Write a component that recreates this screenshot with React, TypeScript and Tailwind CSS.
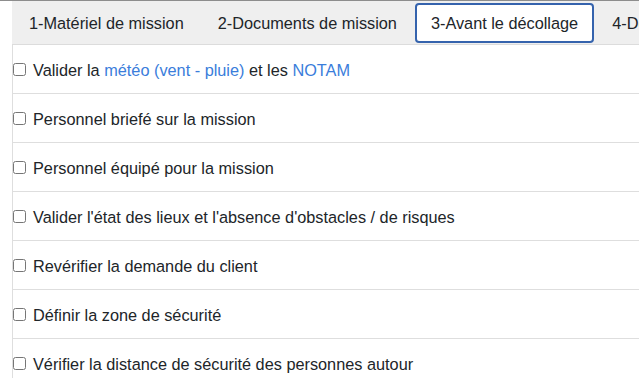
import React from "react";

const tabs = [
  "1-Matériel de mission",
  "2-Documents de mission",
  "3-Avant le décollage",
  "4-Décollage",
];

const Link = ({ children }: { children: React.ReactNode }) => (
  <span className="text-[#3a7ddb]">{children}</span>
);

const rows: React.ReactNode[] = [
  <>
    Valider la <Link>météo (vent - pluie)</Link> et les <Link>NOTAM</Link>
  </>,
  "Personnel briefé sur la mission",
  "Personnel équipé pour la mission",
  "Valider l'état des lieux et l'absence d'obstacles / de risques",
  "Revérifier la demande du client",
  "Définir la zone de sécurité",
  "Vérifier la distance de sécurité des personnes autour",
];

export default function App() {
  return (
    <div
      className="w-[639px] h-[378px] overflow-hidden bg-white border-t border-[#8d8d8d] text-[#212529]"
      style={{ fontFamily: '"Liberation Sans", Arial, sans-serif' }}
    >
      <div className="ml-[12px] h-full flex flex-col">
        <div className="h-[44px] shrink-0 bg-[#efefef] border-b border-[#dcdcdc] flex items-stretch gap-[2px] pl-[1px] pt-[2px] pb-[1px] whitespace-nowrap overflow-hidden">
          {tabs.map((t, i) => (
            <div
              key={t}
              className={
                i === 2
                  ? "flex items-center px-[14px] text-[16.3px] border-2 border-[#3563ad] rounded-[4px] bg-white"
                  : "flex items-center px-[16px] text-[16.3px]"
              }
            >
              {t}
            </div>
          ))}
        </div>
        <div className="flex-1 border-l border-[#dedede]">
          {rows.map((r, i) => (
            <div
              key={i}
              className="h-[49px] flex items-center border-b border-[#dedede] text-[16.3px] whitespace-nowrap"
            >
              <input
                type="checkbox"
                className="m-0 mr-[7px] w-[13px] h-[13px]"
              />
              <span className="pt-[2px]">{r}</span>
            </div>
          ))}
        </div>
      </div>
    </div>
  );
}
